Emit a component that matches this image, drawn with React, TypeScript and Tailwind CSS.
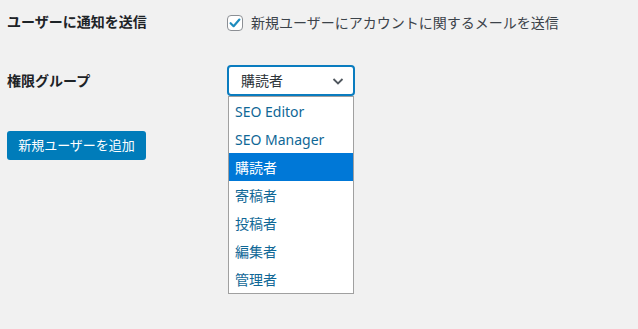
import React from "react";

const font = { fontFamily: '"Noto Sans", "Noto Sans CJK JP", sans-serif' };

const options = ["SEO Editor", "SEO Manager", "購読者", "寄稿者", "投稿者", "編集者", "管理者"];

export default function App() {
  return (
    <div className="w-[638px] h-[329px] bg-[#f1f1f1] text-[#1d2327] overflow-hidden" style={font}>
      <div className="flex items-start pt-[12px] pl-[7px]">
        <div className="w-[220px] text-[14px] leading-[20px] font-semibold">ユーザーに通知を送信</div>
        <label className="flex items-center gap-[8px] mt-[3px] text-[14px] leading-[16px] text-[#3c434a]">
          <span className="w-[16px] h-[16px] rounded-[4px] border border-[#8c8f94] bg-white flex items-center justify-center">
            <svg width="14" height="14" viewBox="0 0 14 14">
              <path d="M2.6 7.2 L5.6 10.2 L11.4 3.6" fill="none" stroke="#1e8cbe" strokeWidth="2.2" strokeLinecap="round" strokeLinejoin="round" />
            </svg>
          </span>
          <span>新規ユーザーにアカウントに関するメールを送信</span>
        </label>
      </div>

      <div className="flex items-start pl-[7px] mt-[33px]">
        <div className="w-[220px] text-[14px] leading-[20px] font-semibold mt-[6px]">権限グループ</div>
        <div className="relative">
          <div className="w-[128px] h-[31px] rounded-[4px] border-2 border-[#0a7cbf] bg-white flex items-center justify-between pl-[12px] pr-[8px] text-[14px] text-[#2c3338]">
            <span>購読者</span>
            <svg width="14" height="14" viewBox="0 0 14 14">
              <path d="M2.5 5 L7 9.5 L11.5 5" fill="none" stroke="#50575e" strokeWidth="1.8" />
            </svg>
          </div>
          <div className="absolute left-[1px] top-[31px] w-[126px] bg-white border border-[#a0a0a0] z-10">
            {options.map((o) => (
              <div
                key={o}
                className={
                  o === "購読者"
                    ? "h-[28px] flex items-center px-[6px] text-[14px] bg-[#0078d7] text-white"
                    : "h-[28px] flex items-center px-[6px] text-[14px] text-[#0f6796]"
                }
              >
                {o}
              </div>
            ))}
          </div>
        </div>
      </div>

      <div className="pl-[7px] mt-[35px]">
        <button className="h-[29px] w-[139px] rounded-[3px] bg-[#007cba] text-white text-[13px] flex items-center justify-center">
          新規ユーザーを追加
        </button>
      </div>
    </div>
  );
}
